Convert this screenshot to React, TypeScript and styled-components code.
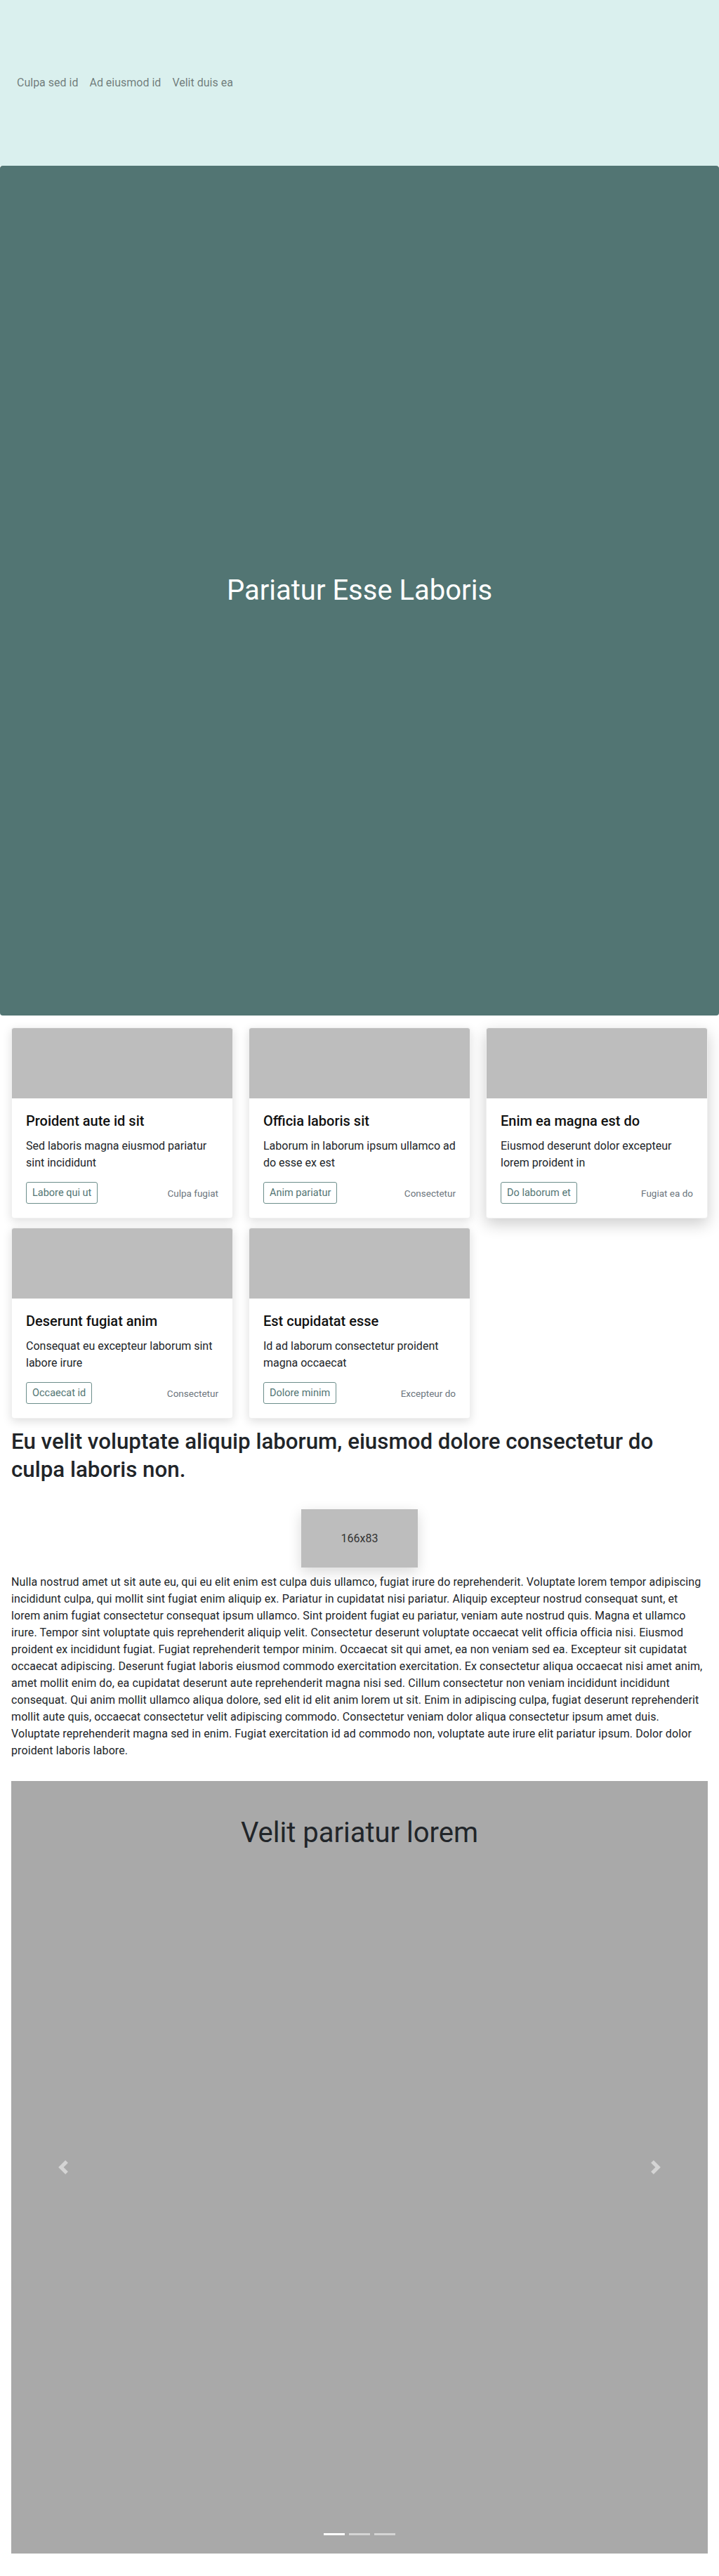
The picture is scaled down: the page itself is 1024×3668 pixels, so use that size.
import React from "react";
import styled, { createGlobalStyle } from "styled-components";

const GlobalStyle = createGlobalStyle`
  html, body { margin: 0; padding: 0; background: #ffffff; }
  body {
    font-family: Roboto, "Liberation Sans", sans-serif;
    color: #212529;
    -webkit-font-smoothing: antialiased;
  }
  * { box-sizing: border-box; }
`;

const Page = styled.div`
  width: 1024px;
  display: flex;
  flex-direction: column;
`;

const Header = styled.header`
  height: 236px;
  background: #daf0ee;
  display: flex;
  align-items: center;
  padding: 0 16px;
`;

const Nav = styled.nav`
  display: flex;
  align-items: center;
`;

const NavLink = styled.a`
  padding: 0 8px;
  font-size: 16px;
  line-height: 24px;
  color: rgba(0, 0, 0, 0.5);
  text-decoration: none;
`;

const Hero = styled.section`
  height: 1210px;
  background: #527573;
  border-radius: 4px;
  display: flex;
  align-items: center;
  justify-content: center;
`;

const HeroTitle = styled.h1`
  margin: 0;
  font-size: 40px;
  line-height: 48px;
  font-weight: 400;
  color: #ffffff;
`;

const CardGrid = styled.section`
  display: grid;
  grid-template-columns: repeat(3, 316px);
  column-gap: 22px;
  row-gap: 13px;
  padding: 17px 16px 0;
`;

const Card = styled.article<{ $raised?: boolean }>`
  background: #ffffff;
  border: 1px solid rgba(0, 0, 0, 0.06);
  border-radius: 4px;
  overflow: hidden;
  display: flex;
  flex-direction: column;
  box-shadow: ${(p) =>
    p.$raised
      ? "0 8px 22px rgba(0, 0, 0, 0.2)"
      : "0 4px 14px rgba(0, 0, 0, 0.13)"};
`;

const CardImage = styled.div`
  height: 100px;
  background: #bdbdbd;
`;

const CardBody = styled.div`
  padding: 20px 20px 20px;
  display: flex;
  flex-direction: column;
`;

const CardTitle = styled.h3`
  margin: 0 0 12px;
  font-size: 20px;
  line-height: 24px;
  font-weight: 500;
  color: #111;
`;

const CardText = styled.p`
  margin: 0 0 15px;
  font-size: 16px;
  line-height: 24px;
  color: #212529;
`;

const CardFooter = styled.div`
  display: flex;
  align-items: center;
  justify-content: space-between;
`;

const OutlineButton = styled.button`
  font-family: inherit;
  font-size: 14.5px;
  line-height: 21px;
  padding: 4px 8px;
  color: #527573;
  background: transparent;
  border: 1px solid #6c8e8b;
  border-radius: 3px;
`;

const Muted = styled.small`
  font-size: 13.5px;
  color: #6c757d;
`;

const Article = styled.section`
  padding: 0 16px;
  display: flex;
  flex-direction: column;
`;

const Heading = styled.h2`
  margin: 13px 0 0;
  font-size: 31.3px;
  line-height: 40px;
  font-weight: 500;
  color: #212529;
`;

const Figure = styled.div`
  align-self: center;
  width: 166px;
  height: 83px;
  margin: 36px 0 9px;
  background: #bdbdbd;
  box-shadow: 0 6px 18px rgba(0, 0, 0, 0.15);
  display: flex;
  justify-content: center;
  padding-top: 32px;
  font-size: 16px;
  line-height: 20px;
  color: #333;
`;

const Paragraph = styled.p`
  margin: 0;
  font-size: 16px;
  line-height: 24px;
  letter-spacing: 0.1px;
  color: #212529;
`;

const Carousel = styled.section`
  position: relative;
  margin: 31px 16px 32px;
  height: 1100px;
  background: #a9a9a9;
  display: flex;
  justify-content: center;
  padding-top: 50px;
`;

const CarouselTitle = styled.h2`
  margin: 0;
  font-size: 40px;
  line-height: 48px;
  font-weight: 400;
  color: #212529;
`;

const Control = styled.button<{ $side: "left" | "right" }>`
  position: absolute;
  top: 0;
  bottom: 0;
  ${(p) => (p.$side === "left" ? "left: 0;" : "right: 0;")}
  width: 15%;
  border: 0;
  background: transparent;
  display: flex;
  align-items: center;
  justify-content: center;
  opacity: 0.5;
`;

const Indicators = styled.div`
  position: absolute;
  left: 0;
  right: 0;
  bottom: 26px;
  display: flex;
  justify-content: center;
  gap: 6px;
`;

const Indicator = styled.span<{ $active?: boolean }>`
  width: 30px;
  height: 3px;
  background: #ffffff;
  opacity: ${(p) => (p.$active ? 1 : 0.5)};
`;

const Chevron = ({ dir }: { dir: "left" | "right" }) => (
  <svg width="20" height="20" viewBox="0 0 8 8" fill="#ffffff">
    {dir === "left" ? (
      <path d="M5.25 0l-4 4 4 4 1.5-1.5L4.25 4l2.5-2.5L5.25 0z" />
    ) : (
      <path d="M2.75 0l-1.5 1.5L3.75 4l-2.5 2.5L2.75 8l4-4-4-4z" />
    )}
  </svg>
);

const cards = [
  {
    title: "Proident aute id sit",
    text: "Sed laboris magna eiusmod pariatur sint incididunt",
    button: "Labore qui ut",
    meta: "Culpa fugiat",
  },
  {
    title: "Officia laboris sit",
    text: "Laborum in laborum ipsum ullamco ad do esse ex est",
    button: "Anim pariatur",
    meta: "Consectetur",
  },
  {
    title: "Enim ea magna est do",
    text: "Eiusmod deserunt dolor excepteur lorem proident in",
    button: "Do laborum et",
    meta: "Fugiat ea do",
    raised: true,
  },
  {
    title: "Deserunt fugiat anim",
    text: "Consequat eu excepteur laborum sint labore irure",
    button: "Occaecat id",
    meta: "Consectetur",
  },
  {
    title: "Est cupidatat esse",
    text: "Id ad laborum consectetur proident magna occaecat",
    button: "Dolore minim",
    meta: "Excepteur do",
  },
];

const paragraph =
  "Nulla nostrud amet ut sit aute eu, qui eu elit enim est culpa duis ullamco, fugiat irure do reprehenderit. Voluptate lorem tempor adipiscing incididunt culpa, qui mollit sint fugiat enim aliquip ex. Pariatur in cupidatat nisi pariatur. Aliquip excepteur nostrud consequat sunt, et lorem anim fugiat consectetur consequat ipsum ullamco. Sint proident fugiat eu pariatur, veniam aute nostrud quis. Magna et ullamco irure. Tempor sint voluptate quis reprehenderit aliquip velit. Consectetur deserunt voluptate occaecat velit officia officia nisi. Eiusmod proident ex incididunt fugiat. Fugiat reprehenderit tempor minim. Occaecat sit qui amet, ea non veniam sed ea. Excepteur sit cupidatat occaecat adipiscing. Deserunt fugiat laboris eiusmod commodo exercitation exercitation. Ex consectetur aliqua occaecat nisi amet anim, amet mollit enim do, ea cupidatat deserunt aute reprehenderit magna nisi sed. Cillum consectetur non veniam incididunt incididunt consequat. Qui anim mollit ullamco aliqua dolore, sed elit id elit anim lorem ut sit. Enim in adipiscing culpa, fugiat deserunt reprehenderit mollit aute quis, occaecat consectetur velit adipiscing commodo. Consectetur veniam dolor aliqua consectetur ipsum amet duis. Voluptate reprehenderit magna sed in enim. Fugiat exercitation id ad commodo non, voluptate aute irure elit pariatur ipsum. Dolor dolor proident laboris labore.";

export default function App() {
  return (
    <Page>
      <GlobalStyle />
      <Header>
        <Nav>
          <NavLink>Culpa sed id</NavLink>
          <NavLink>Ad eiusmod id</NavLink>
          <NavLink>Velit duis ea</NavLink>
        </Nav>
      </Header>
      <Hero>
        <HeroTitle>Pariatur Esse Laboris</HeroTitle>
      </Hero>
      <CardGrid>
        {cards.map((c) => (
          <Card key={c.title} $raised={c.raised}>
            <CardImage />
            <CardBody>
              <CardTitle>{c.title}</CardTitle>
              <CardText>{c.text}</CardText>
              <CardFooter>
                <OutlineButton>{c.button}</OutlineButton>
                <Muted>{c.meta}</Muted>
              </CardFooter>
            </CardBody>
          </Card>
        ))}
      </CardGrid>
      <Article>
        <Heading>
          Eu velit voluptate aliquip laborum, eiusmod dolore consectetur do
          culpa laboris non.
        </Heading>
        <Figure>166x83</Figure>
        <Paragraph>{paragraph}</Paragraph>
      </Article>
      <Carousel>
        <CarouselTitle>Velit pariatur lorem</CarouselTitle>
        <Control $side="left" aria-label="Previous">
          <Chevron dir="left" />
        </Control>
        <Control $side="right" aria-label="Next">
          <Chevron dir="right" />
        </Control>
        <Indicators>
          <Indicator $active />
          <Indicator />
          <Indicator />
        </Indicators>
      </Carousel>
    </Page>
  );
}
